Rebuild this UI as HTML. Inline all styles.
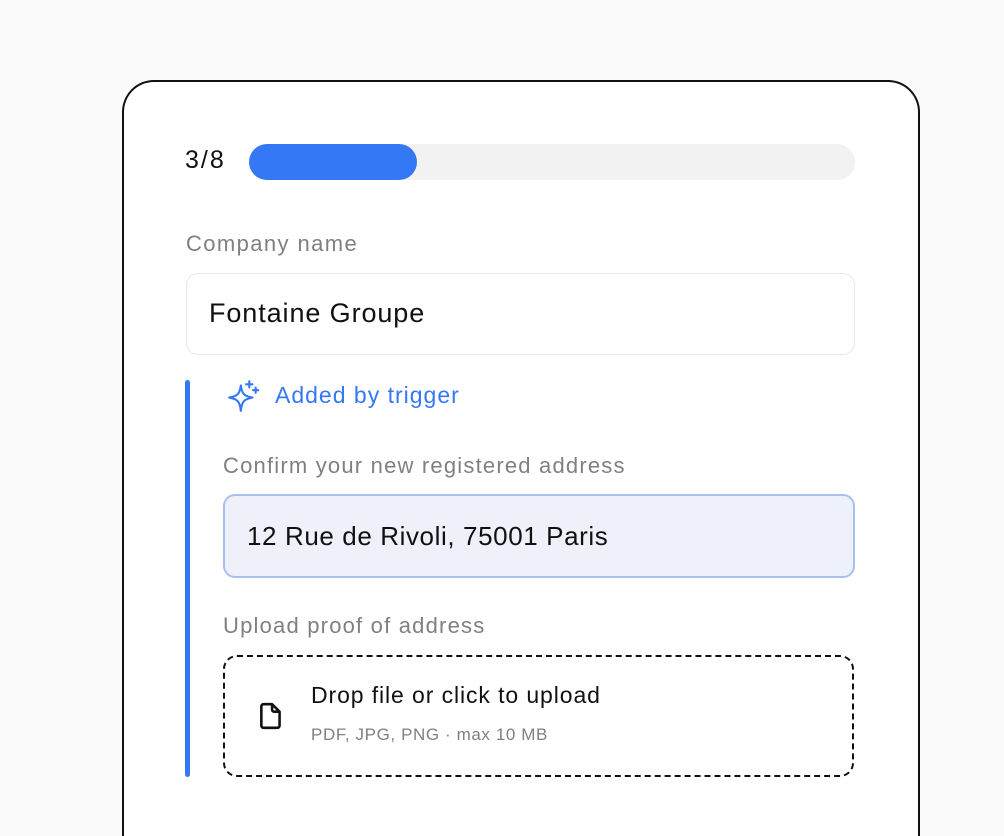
<!DOCTYPE html>
<html><head><style>
html,body{margin:0;width:1004px;height:836px;overflow:hidden}
body{background:#fafafa;font-family:"Liberation Sans",sans-serif;position:relative}
.card{position:absolute;left:122px;top:80px;width:794px;height:756px;background:#fff;border:2px solid #111;border-bottom:none;border-radius:32px 32px 0 0}
.a{position:absolute;white-space:nowrap}
.lbl{color:#808080;font-size:22px}
</style></head><body>
<div class="card"></div>
<div class="a" style="left:185px;top:146px;font-size:25px;color:#111;letter-spacing:2px">3/8</div>
<div class="a" style="left:249px;top:144px;width:606px;height:36px;background:#f2f2f2;border-radius:18px"></div>
<div class="a" style="left:249px;top:144px;width:168px;height:36px;background:#3478f6;border-radius:18px"></div>
<div class="a lbl" style="left:186px;top:231px;letter-spacing:1.4px">Company name</div>
<div class="a" style="left:186px;top:273px;width:667px;height:80px;border:1px solid #e8e8e8;border-radius:12px"></div>
<div class="a" style="left:209px;top:298px;font-size:27px;color:#111;letter-spacing:0.9px">Fontaine Groupe</div>
<div class="a" style="left:185px;top:380px;width:5px;height:397px;background:#3478f6;border-radius:3px"></div>
<svg class="a" style="left:226px;top:379px" width="36" height="34" viewBox="0 0 34 32" fill="none" stroke="#3478f6" stroke-width="2" stroke-linecap="round" stroke-linejoin="round"><path d="M14 6 C15 14 17 16 25 17.5 C17 19 15 21 14 30 C13 21 11 19 3 17.5 C11 16 13 14 14 6Z"/><path d="M22 2v6M19 5h6M28 8v5M25.5 10.5h5"/></svg>
<div class="a" style="left:275px;top:382px;font-size:23px;color:#3478f6;letter-spacing:1px">Added by trigger</div>
<div class="a lbl" style="left:223px;top:453px;letter-spacing:1.2px">Confirm your new registered address</div>
<div class="a" style="left:223px;top:494px;width:628px;height:80px;background:#eef1f9;border:2px solid #a9c0ef;border-radius:12px"></div>
<div class="a" style="left:247px;top:521px;font-size:26px;color:#111;letter-spacing:0.6px">12 Rue de Rivoli, 75001 Paris</div>
<div class="a lbl" style="left:223px;top:613px;letter-spacing:1.2px">Upload proof of address</div>
<div class="a" style="left:223px;top:655px;width:627px;height:118px;border:2px dashed #111;border-radius:14px"></div>
<svg class="a" style="left:257px;top:701px" width="28" height="30" viewBox="0 0 26 28" fill="none" stroke="#111" stroke-width="2.4" stroke-linejoin="round"><path d="M6 3h8l7 7v13a2 2 0 0 1-2 2H6a2 2 0 0 1-2-2V5a2 2 0 0 1 2-2Z"/><path d="M14 3v5a2 2 0 0 0 2 2h5"/></svg>
<div class="a" style="left:311px;top:682px;font-size:23px;color:#111;letter-spacing:0.9px">Drop file or click to upload</div>
<div class="a" style="left:311px;top:725px;font-size:17px;color:#808080;letter-spacing:0.6px">PDF, JPG, PNG · max 10 MB</div>
</body></html>
